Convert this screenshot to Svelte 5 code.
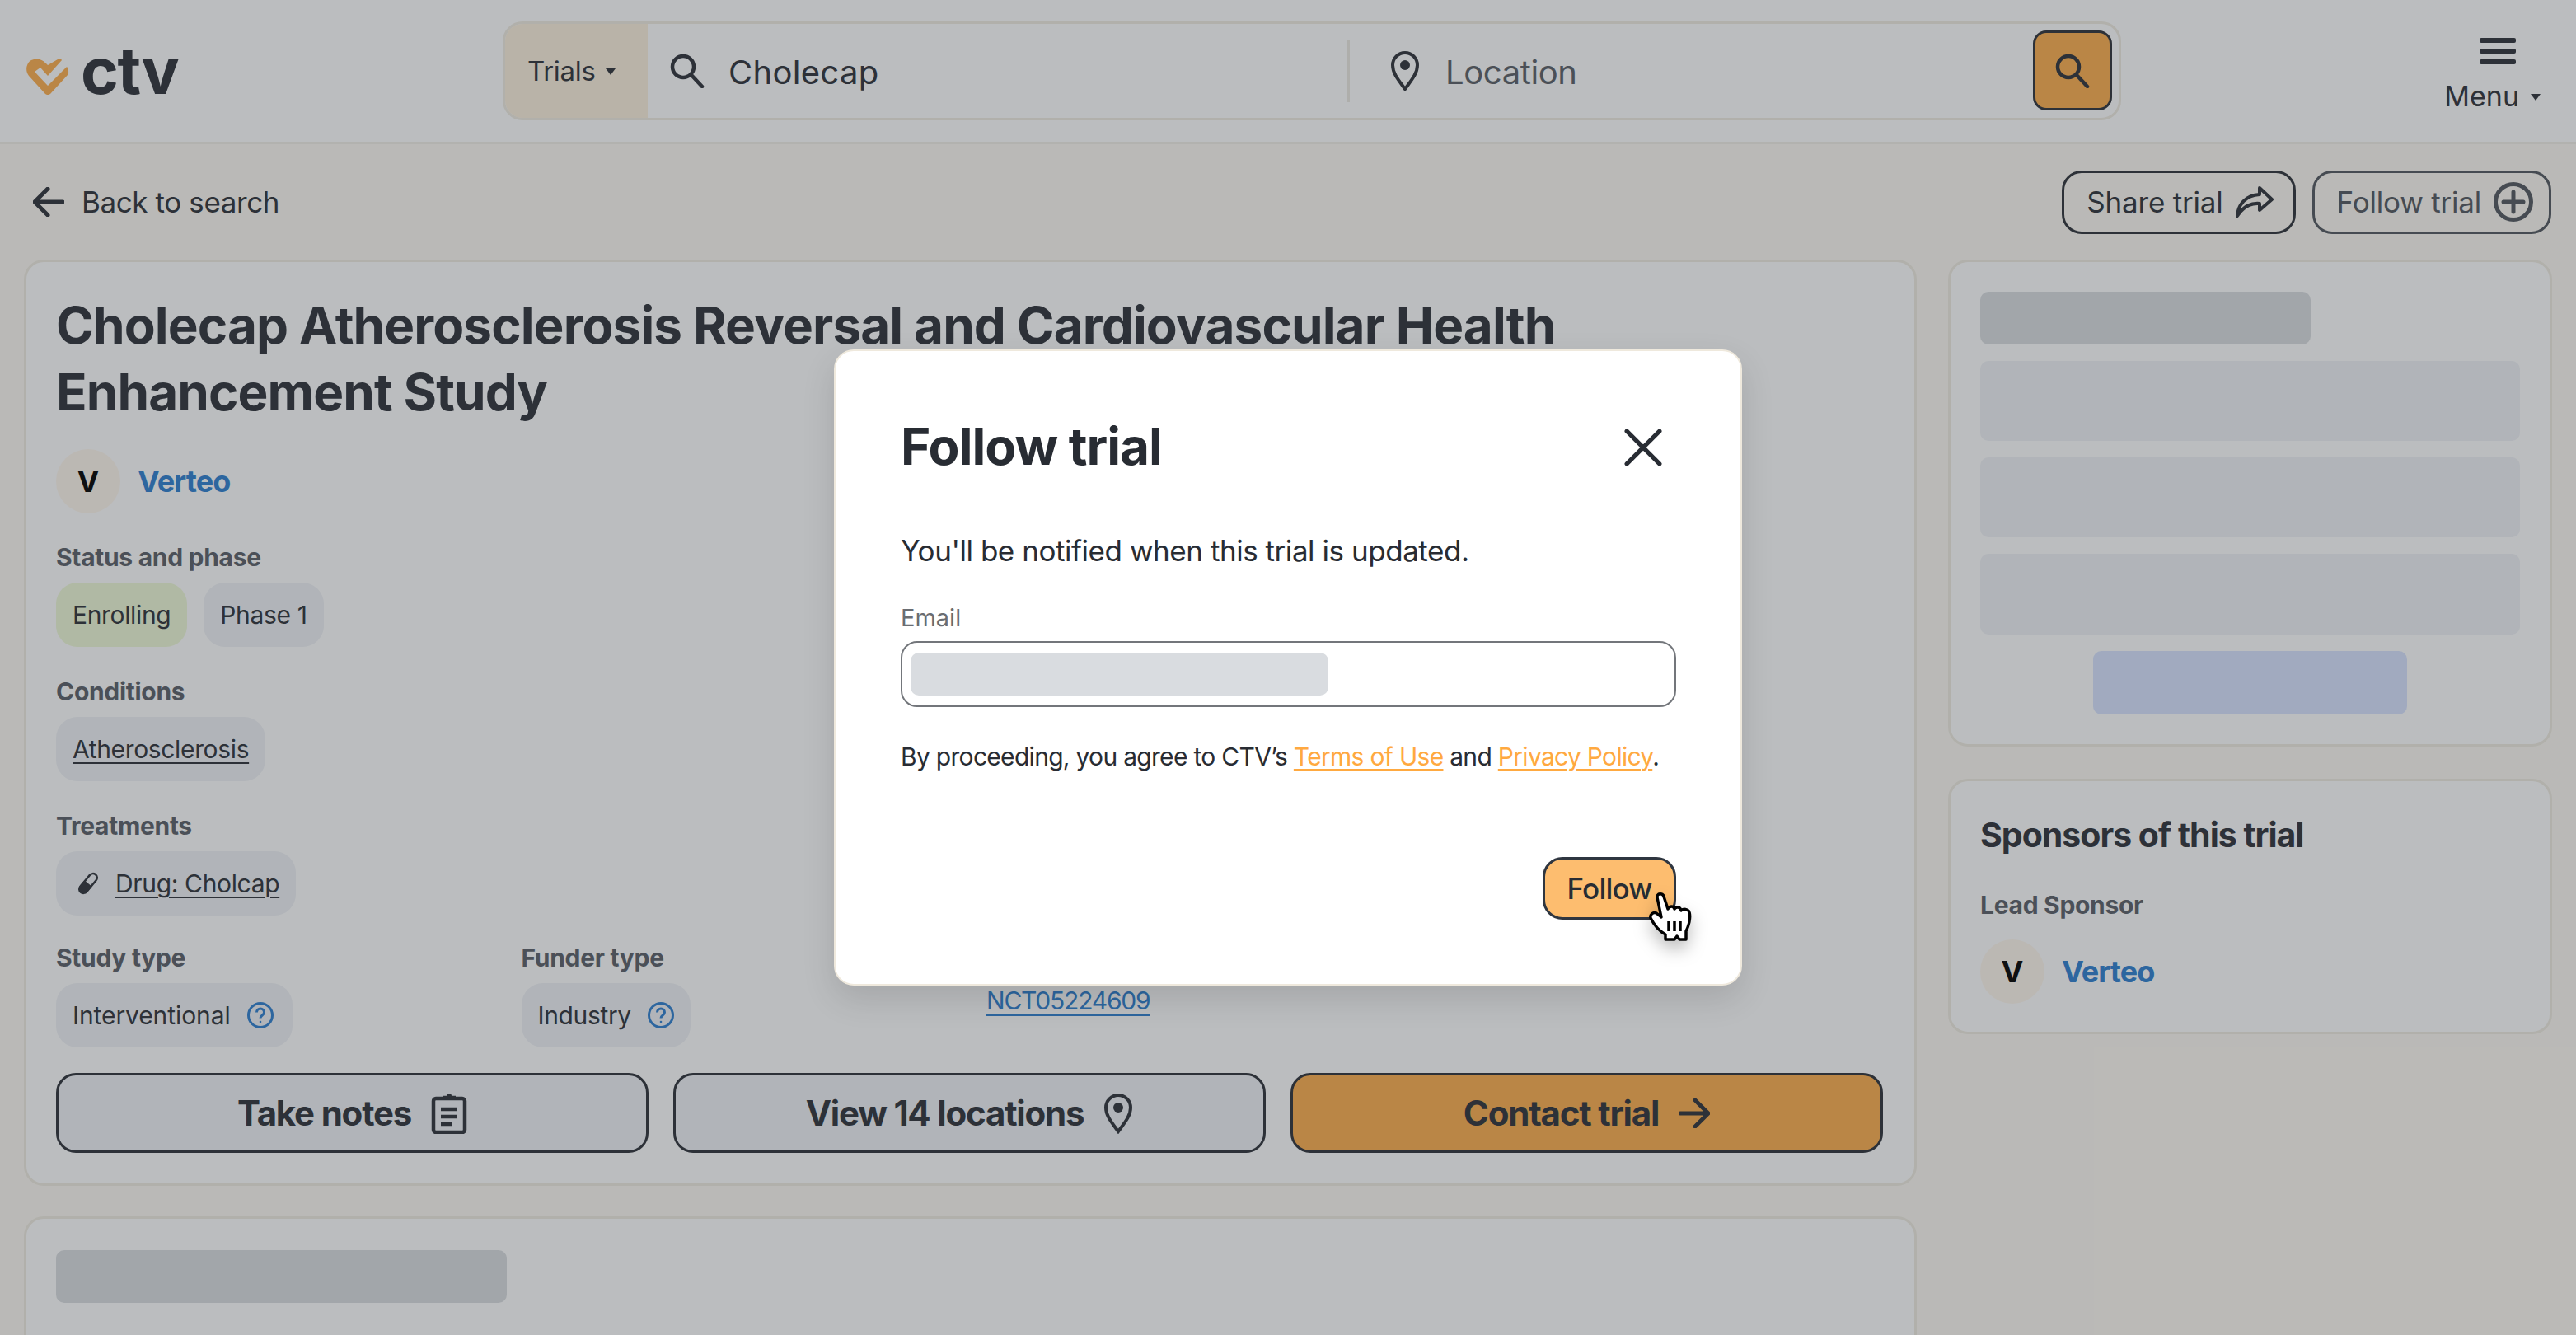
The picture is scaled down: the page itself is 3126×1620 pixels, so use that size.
<script>
  const conditions = ["Atherosclerosis"];
  const skeletonRows = [0, 1, 2];
</script>

<div class="page">
  <header class="topbar">
    <div class="logo">
      <svg class="logo-mark" viewBox="0 0 52 44" aria-hidden="true">
        <path d="M26 8 38 1c2-1 4-1 5 1L26 21 17 11l-7 5 16 17 23-23c2 2 3 7 1 10L29 43c-2 1.500-4 1.500-6 0L3 21C-2 15 0 5 6 2c6-3 13-2 20 6Z" fill="#feaf4d" />
      </svg>
      <span class="logo-text">ctv</span>
    </div>

    <div class="searchbar">
      <div class="kind">Trials <span class="caret"></span></div>
      <div class="field what">
        <svg class="icon-search" viewBox="0 0 42 42" aria-hidden="true">
          <circle cx="16" cy="16" r="13" />
          <path d="M26 26 39 40" />
        </svg>
        <span class="query">Cholecap</span>
      </div>
      <div class="field where">
        <svg class="icon-pin" viewBox="0 0 36 50" aria-hidden="true">
          <path d="M18 47C10 36 3 28 3 18a15 15 0 0 1 30 0c0 10-7 18-15 29Z" />
          <circle cx="18" cy="18" r="6" class="dot" />
        </svg>
        <span class="placeholder">Location</span>
      </div>
      <button class="search-go" aria-label="Search">
        <svg class="icon-search" viewBox="0 0 42 42" aria-hidden="true">
          <circle cx="16" cy="16" r="13" />
          <path d="M26 26 39 40" />
        </svg>
      </button>
    </div>

    <div class="menu">
      <div class="burger"><i></i><i></i><i></i></div>
      <div class="menu-label">Menu <span class="caret"></span></div>
    </div>
  </header>

  <div class="subbar">
    <a class="back" href="#back">
      <svg class="icon-back" viewBox="0 0 38 36" aria-hidden="true">
        <path d="M36 18H3M18 2 2 18l16 16" />
      </svg>
      Back to search
    </a>
    <div class="sub-actions">
      <button class="ghost">
        Share trial
        <svg class="icon-share" viewBox="0 0 46 38" aria-hidden="true">
          <path d="M2 36C3 22 12 11 29 10V2l15 14-15 13v-8C18 20 9 25 2 36Z" />
        </svg>
      </button>
      <button class="ghost muted">
        Follow trial
        <svg class="icon-plus" viewBox="0 0 48 48" aria-hidden="true">
          <circle cx="24" cy="24" r="21.5" />
          <path d="M24 12v24M12 24h24" />
        </svg>
      </button>
    </div>
  </div>

  <main class="content">
    <div class="primary">
      <section class="card summary">
        <h1>Cholecap Atherosclerosis Reversal and Cardiovascular Health Enhancement Study</h1>

        <div class="org">
          <span class="avatar">V</span>
          <a href="#verteo" class="org-name">Verteo</a>
        </div>

        <h3 class="first">Status and phase</h3>
        <div class="chips">
          <span class="chip green">Enrolling</span>
          <span class="chip">Phase 1</span>
        </div>

        <h3>Conditions</h3>
        <div class="chips">
          {#each conditions as condition}
            <a class="chip linked" href="#condition">{condition}</a>
          {/each}
        </div>

        <h3>Treatments</h3>
        <div class="chips">
          <span class="chip">
            <svg class="icon-pill" viewBox="0 0 26 26" aria-hidden="true">
              <g transform="rotate(40 13 13)">
                <rect x="8" y="-1" width="10" height="28" rx="5" />
                <path d="M7 13h12v8a6 6 0 0 1-12 0Z" class="pill-half" />
              </g>
            </svg>
            <a class="plain-link" href="#drug">Drug: Cholcap</a>
          </span>
        </div>

        <div class="facts">
          <div>
            <h3>Study type</h3>
            <span class="chip roomy">
              Interventional
              <svg class="icon-help" viewBox="0 0 32 32" aria-hidden="true">
                <circle cx="16" cy="16" r="14.500" />
                <path d="M11.500 12.500c0-6 9-6 9 0 0 3.500-4.500 3.500-4.500 7" />
                <circle cx="16" cy="24" r="1.300" class="dot" />
              </svg>
            </span>
          </div>
          <div>
            <h3>Funder type</h3>
            <span class="chip">
              Industry
              <svg class="icon-help" viewBox="0 0 32 32" aria-hidden="true">
                <circle cx="16" cy="16" r="14.500" />
                <path d="M11.500 12.500c0-6 9-6 9 0 0 3.500-4.500 3.500-4.500 7" />
                <circle cx="16" cy="24" r="1.300" class="dot" />
              </svg>
            </span>
          </div>
          <div>
            <h3>Trial ID</h3>
            <a class="nct" href="#nct">NCT05224609</a>
          </div>
        </div>

        <div class="actions">
          <button class="wide">
            Take notes
            <svg class="icon-notes" viewBox="0 0 44 50" aria-hidden="true">
              <rect x="3" y="7" width="38" height="41" rx="3" />
              <path d="M14 6h16M12 20h20M12 29h20M12 38h13" />
              <circle cx="22" cy="4" r="3" class="dot" />
            </svg>
          </button>
          <button class="wide">
            View 14 locations
            <svg class="icon-pin" viewBox="0 0 36 50" aria-hidden="true">
              <path d="M18 47C10 36 3 28 3 18a15 15 0 0 1 30 0c0 10-7 18-15 29Z" />
              <circle cx="18" cy="18" r="6" class="dot" />
            </svg>
          </button>
          <button class="wide orange">
            Contact trial
            <svg class="icon-forward" viewBox="0 0 38 36" aria-hidden="true">
              <path d="M2 18h33M20 2l16 16-16 16" />
            </svg>
          </button>
        </div>
      </section>

      <section class="card second">
        <div class="skeleton dark heading"></div>
      </section>
    </div>

    <aside class="side">
      <section class="card side-form">
        <div class="skeleton dark side-title"></div>
        {#each skeletonRows as row (row)}
          <div class="skeleton row"></div>
        {/each}
        <div class="skeleton blue"></div>
      </section>

      <section class="card sponsors">
        <h2>Sponsors of this trial</h2>
        <h3 class="first">Lead Sponsor</h3>
        <div class="org">
          <span class="avatar">V</span>
          <a href="#verteo" class="org-name">Verteo</a>
        </div>
      </section>
    </aside>
  </main>

  <div class="scrim">
    <div class="modal" role="dialog" aria-label="Follow trial">
      <div class="modal-head">
        <h2>Follow trial</h2>
        <button class="close" aria-label="Close">
          <svg viewBox="0 0 44 44" aria-hidden="true">
            <path d="M3 3 41 41M41 3 3 41" />
          </svg>
        </button>
      </div>
      <p class="lead">You'll be notified when this trial is updated.</p>
      <label class="email-label" for="email">Email</label>
      <div class="email-box" id="email"><span class="redacted"></span></div>
      <p class="legal">
        By proceeding, you agree to CTV’s
        <a href="#terms">Terms of Use</a> and <a href="#privacy">Privacy Policy</a>.
      </p>
      <div class="modal-foot">
        <button class="follow">Follow</button>
        <svg class="cursor" viewBox="-2 -2 56 62" aria-hidden="true">
          <path d="M9 5C8 0 16-1 17 4l5 15c2-4 7-4 8 0 2-3 7-3 8 2 2-3 9-2 10 2 2 7-1 17-4 23v10h-8l-3-4-3 4H19v-6C12 46 5 38 1 30c-1-4 3-8 7-6l6 5L9 5Z" />
          <path class="cursor-lines" d="M23 34v12M30 34v12M37 34v12" />
        </svg>
      </div>
    </div>
  </div>
</div>

<style>
  :global(body) {
    margin: 0;
    background: #fefaf3;
    font-family: Inter, "Liberation Sans", sans-serif;
    color: #2e3239;
  }

  * {
    box-sizing: border-box;
  }

  a {
    color: inherit;
  }

  button {
    font-family: inherit;
    color: inherit;
    cursor: pointer;
  }

  h1,
  h2,
  h3,
  p {
    margin: 0;
  }

  .page {
    position: relative;
    height: 1620px;
    overflow: hidden;
  }

  /* top bar */
  .topbar {
    display: flex;
    align-items: center;
    height: 175px;
    padding: 0 43px 1px 32px;
    background: #fff;
    border-bottom: 3px solid #f2efe7;
  }

  .logo {
    display: flex;
    align-items: flex-end;
    gap: 14px;
    width: 578px;
    height: 60px;
  }

  .logo-mark {
    width: 52px;
    height: 44px;
    margin-bottom: 1px;
  }

  .logo-text {
    font-size: 78px;
    line-height: 60px;
    font-weight: 700;
    letter-spacing: -1.500px;
    height: 60px;
  }

  .searchbar {
    display: flex;
    align-items: center;
    width: 1964px;
    height: 120px;
    border: 3px solid #f0ece2;
    border-radius: 24px;
    overflow: hidden;
    padding-right: 8px;
  }

  .kind {
    display: flex;
    align-items: center;
    gap: 12px;
    align-self: stretch;
    width: 173px;
    padding-left: 27px;
    background: #fcf0dd;
    font-size: 33px;
    letter-spacing: -0.3px;
  }

  .caret {
    display: inline-block;
    width: 0;
    height: 0;
    border-left: 6px solid transparent;
    border-right: 6px solid transparent;
    border-top: 8px solid currentColor;
    margin-top: 2px;
  }

  .field {
    display: flex;
    align-items: center;
    font-size: 40px;
  }

  .field span {
    padding-top: 3px;
  }

  .query {
    letter-spacing: 0.3px;
  }

  .what {
    width: 852px;
    padding-left: 27px;
    gap: 29px;
    height: 76px;
    border-right: 3px solid #ece9e2;
  }

  .where {
    flex: 1;
    padding-left: 49px;
    gap: 31px;
    color: #5a5f66;
  }

  .icon-search {
    width: 42px;
    height: 42px;
    fill: none;
    stroke: currentColor;
    stroke-width: 4.500;
    stroke-linecap: round;
  }

  .icon-pin {
    width: 36px;
    height: 50px;
    fill: none;
    stroke: #2e3239;
    stroke-width: 4;
  }

  .icon-pin .dot {
    fill: #2e3239;
    stroke: none;
  }

  .placeholder {
    letter-spacing: -0.4px;
  }

  .search-go {
    display: flex;
    align-items: center;
    justify-content: center;
    width: 96px;
    height: 97px;
    padding: 0;
    background: #feaf4d;
    border: 3px solid #2e3239;
    border-radius: 16px;
  }

  .menu {
    display: flex;
    flex-direction: column;
    align-items: flex-end;
    flex: 1;
    margin-top: 12px;
  }

  .burger {
    display: flex;
    flex-direction: column;
    gap: 7px;
    width: 44px;
    margin-right: 30px;
  }

  .burger i {
    display: block;
    height: 6px;
    border-radius: 2px;
    background: #2e3239;
  }

  .menu-label {
    display: flex;
    align-items: center;
    gap: 14px;
    margin-top: 18px;
    font-size: 34px;
    line-height: 42px;
  }

  /* back row */
  .subbar {
    display: flex;
    align-items: center;
    justify-content: space-between;
    height: 140px;
    padding: 0 30px 0 40px;
  }

  .back {
    display: flex;
    align-items: center;
    gap: 21px;
    font-size: 35px;
    letter-spacing: -0.4px;
    text-decoration: none;
  }

  .icon-back,
  .icon-forward {
    width: 38px;
    height: 36px;
    fill: none;
    stroke: currentColor;
    stroke-width: 5;
    stroke-linecap: round;
    stroke-linejoin: round;
  }

  .sub-actions {
    display: flex;
    gap: 20px;
  }

  .ghost {
    display: flex;
    align-items: center;
    gap: 15px;
    height: 77px;
    padding: 0 24px 0 27px;
    background: transparent;
    border: 3px solid #2e3239;
    border-radius: 24px;
    font-size: 35px;
    letter-spacing: -0.2px;
  }

  .ghost.muted {
    padding-right: 19px;
    border-color: #53585f;
    color: #53585f;
  }

  .icon-share {
    width: 46px;
    height: 38px;
    fill: none;
    stroke: currentColor;
    stroke-width: 4;
    stroke-linejoin: round;
  }

  .icon-plus {
    width: 48px;
    height: 48px;
    fill: none;
    stroke: currentColor;
    stroke-width: 5;
    stroke-linecap: round;
  }

  /* content */
  .content {
    display: flex;
    gap: 38px;
    padding: 0 29px;
  }

  .primary {
    display: flex;
    flex-direction: column;
    gap: 37px;
    width: 2297px;
  }

  .side {
    display: flex;
    flex-direction: column;
    gap: 39px;
    width: 733px;
  }

  .card {
    background: #fff;
    border: 3px solid #f0ece2;
    border-radius: 24px;
    padding: 36px;
  }

  .summary {
    height: 1124px;
    padding-right: 38px;
  }

  h1 {
    width: 1900px;
    font-size: 62px;
    line-height: 81px;
    font-weight: 700;
    letter-spacing: -0.900px;
  }

  .org {
    display: flex;
    align-items: center;
    gap: 21px;
  }

  .summary .org {
    margin-top: 29px;
  }

  .avatar {
    display: flex;
    align-items: center;
    justify-content: center;
    width: 78px;
    height: 78px;
    border-radius: 50%;
    background: #fff8ee;
    font-size: 36px;
    font-weight: 700;
    color: #000;
  }

  .org-name {
    font-size: 36px;
    font-weight: 700;
    letter-spacing: -0.9px;
    color: #2f7fd0;
    text-decoration: none;
  }

  h3 {
    margin-top: 36px;
    margin-bottom: 13px;
    font-size: 30px;
    line-height: 36px;
    font-weight: 700;
    letter-spacing: -0.3px;
    color: #5a5f67;
  }

  h3.first {
    margin-top: 35px;
  }

  .chips {
    display: flex;
    gap: 20px;
  }

  .chip {
    display: inline-flex;
    align-items: center;
    gap: 20px;
    height: 78px;
    padding: 0 20px;
    border-radius: 26px;
    background: #f0f2f6;
    font-size: 30px;
    letter-spacing: -0.35px;
  }

  .chip.green {
    background: #effad7;
  }

  .chip.roomy {
    padding-right: 23px;
    letter-spacing: -0.1px;
  }

  .linked,
  .plain-link {
    text-decoration: underline;
    text-underline-offset: 5px;
    text-decoration-thickness: 2px;
  }

  .icon-pill {
    width: 26px;
    height: 26px;
    margin-left: 6px;
    fill: none;
    stroke: #2e3239;
    stroke-width: 2.500;
    flex: none;
    overflow: visible;
  }

  .pill-half {
    fill: #2e3239;
    stroke: none;
  }

  .facts {
    display: grid;
    grid-template-columns: repeat(3, 564.500px);
  }

  .facts h3 {
    margin-top: 33px;
  }

  .icon-help {
    width: 32px;
    height: 32px;
    fill: none;
    stroke: #2f7fd0;
    stroke-width: 3;
    flex: none;
  }

  .icon-help .dot {
    fill: #2f7fd0;
    stroke: none;
  }

  .nct {
    display: block;
    margin-top: 16px;
    font-size: 30px;
    letter-spacing: -1.200px;
    color: #2f7fd0;
    text-underline-offset: 5px;
  }

  .actions {
    display: flex;
    gap: 30px;
    margin-top: 31px;
  }

  .wide {
    display: flex;
    flex: 1;
    align-items: center;
    justify-content: center;
    gap: 24px;
    height: 97px;
    background: #f0f2f6;
    border: 3px solid #2e3239;
    border-radius: 24px;
    font-size: 42px;
    font-weight: 700;
    letter-spacing: -1.200px;
  }

  .wide.orange {
    background: #feaf4d;
  }

  .icon-notes {
    width: 44px;
    height: 50px;
    fill: none;
    stroke: currentColor;
    stroke-width: 4.500;
  }

  .icon-notes .dot {
    fill: currentColor;
    stroke: none;
  }

  .second {
    height: 400px;
    padding-top: 38px;
  }

  .skeleton {
    border-radius: 10px;
    background: #f0f2f6;
  }

  .skeleton.dark {
    background: #dadde0;
  }

  .heading {
    width: 547px;
    height: 64px;
  }

  .side-form {
    display: flex;
    flex-direction: column;
    gap: 20px;
    height: 591px;
  }

  .side-title {
    width: 401px;
    height: 64px;
  }

  .row {
    height: 98px;
  }

  .skeleton.blue {
    align-self: center;
    width: 381px;
    height: 78px;
    background: #d9e4ff;
  }

  .sponsors {
    height: 310px;
    padding-top: 37px;
  }

  .sponsors h2 {
    font-size: 41px;
    line-height: 56px;
    font-weight: 700;
    letter-spacing: -1px;
  }

  .sponsors h3 {
    margin-top: 39px;
    margin-bottom: 24px;
  }

  /* modal */
  .scrim {
    position: absolute;
    inset: 0;
    display: flex;
    align-items: center;
    justify-content: center;
    background: rgba(45, 50, 56, 0.32);
  }

  .modal {
    width: 1102px;
    height: 772px;
    padding: 80px 78px 0 79px;
    background: #fff;
    color: #282c33;
    border: 2px solid #efe9dd;
    border-radius: 24px;
    box-shadow: 0 16px 40px rgba(0, 0, 0, 0.12);
  }

  .modal-head {
    display: flex;
    align-items: center;
    justify-content: space-between;
    height: 70px;
  }

  .modal-head h2 {
    font-size: 62px;
    font-weight: 700;
    letter-spacing: -1px;
  }

  .close {
    width: 46px;
    height: 46px;
    margin: 4px 17px 0 0;
    padding: 0;
    border: 0;
    background: none;
  }

  .close svg {
    display: block;
    fill: none;
    stroke: #282c33;
    stroke-width: 5;
    stroke-linecap: round;
  }

  .lead {
    margin-top: 70px;
    font-size: 35px;
    line-height: 44px;
    letter-spacing: -0.450px;
  }

  .email-label {
    display: block;
    margin-top: 42px;
    font-size: 29px;
    line-height: 36px;
    color: #6a6d72;
  }

  .email-box {
    height: 80px;
    margin-top: 10px;
    padding: 12px 10px;
    border: 2px solid #73767b;
    border-radius: 20px;
  }

  .redacted {
    display: block;
    width: 507px;
    height: 52px;
    border-radius: 10px;
    background: #d9dce0;
  }

  .legal {
    margin-top: 41px;
    font-size: 30px;
    line-height: 38px;
    letter-spacing: -0.700px;
  }

  .legal a {
    color: #ffa940;
    text-underline-offset: 4px;
    text-decoration-thickness: 2px;
  }

  .modal-foot {
    position: relative;
    display: flex;
    justify-content: flex-end;
    margin-top: 103px;
  }

  .follow {
    width: 162px;
    height: 76px;
    padding: 0;
    background: #fdbd6f;
    border: 3px solid #2f3640;
    border-radius: 24px;
    font-size: 35px;
    font-weight: 500;
    letter-spacing: -0.800px;
  }

  .cursor {
    position: absolute;
    right: -22px;
    top: 42px;
    width: 56px;
    height: 62px;
    fill: #fff;
    stroke: #000;
    stroke-width: 3.500;
    stroke-linejoin: round;
    filter: drop-shadow(0 10px 10px rgba(0, 0, 0, 0.25));
  }

  .cursor-lines {
    fill: none;
    stroke-width: 3.500;
  }
</style>
